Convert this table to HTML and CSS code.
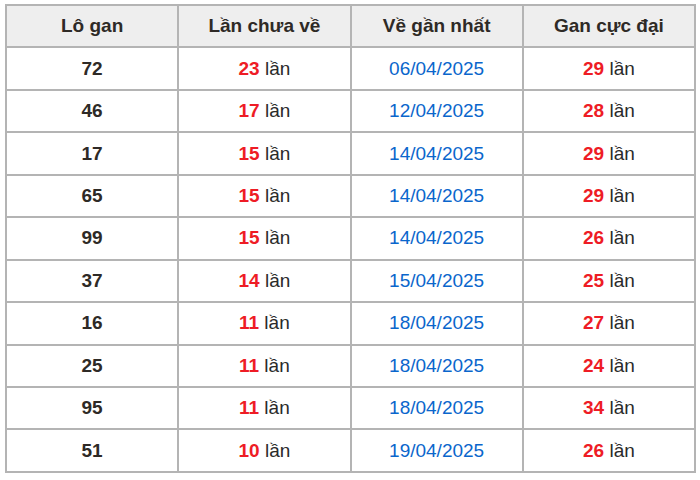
FILE: index.html
```html
<!DOCTYPE html>
<html lang="vi">
<head>
<meta charset="utf-8">
<title>Lô gan</title>
<link rel="stylesheet" href="styles.css">
</head>
<body>
<table class="gan">
  <thead>
    <tr><th>Lô gan</th><th>Lần chưa về</th><th>Về gần nhất</th><th>Gan cực đại</th></tr>
  </thead>
  <tbody>
    <tr><td class="num">72</td><td><span class="red">23</span> lần</td><td class="date">06/04/2025</td><td><span class="red">29</span> lần</td></tr>
    <tr><td class="num">46</td><td><span class="red">17</span> lần</td><td class="date">12/04/2025</td><td><span class="red">28</span> lần</td></tr>
    <tr><td class="num">17</td><td><span class="red">15</span> lần</td><td class="date">14/04/2025</td><td><span class="red">29</span> lần</td></tr>
    <tr><td class="num">65</td><td><span class="red">15</span> lần</td><td class="date">14/04/2025</td><td><span class="red">29</span> lần</td></tr>
    <tr><td class="num">99</td><td><span class="red">15</span> lần</td><td class="date">14/04/2025</td><td><span class="red">26</span> lần</td></tr>
    <tr><td class="num">37</td><td><span class="red">14</span> lần</td><td class="date">15/04/2025</td><td><span class="red">25</span> lần</td></tr>
    <tr><td class="num">16</td><td><span class="red">11</span> lần</td><td class="date">18/04/2025</td><td><span class="red">27</span> lần</td></tr>
    <tr><td class="num">25</td><td><span class="red">11</span> lần</td><td class="date">18/04/2025</td><td><span class="red">24</span> lần</td></tr>
    <tr><td class="num">95</td><td><span class="red">11</span> lần</td><td class="date">18/04/2025</td><td><span class="red">34</span> lần</td></tr>
    <tr><td class="num">51</td><td><span class="red">10</span> lần</td><td class="date">19/04/2025</td><td><span class="red">26</span> lần</td></tr>
  </tbody>
</table>
</body>
</html>
```
FILE: styles.css
```css
html, body {
  margin: 0;
  padding: 0;
  background: #ffffff;
}
body {
  padding: 4px 0 0 5px;
  font-family: "Liberation Sans", Arial, sans-serif;
  color: #2a2a2a;
}
.gan {
  border-collapse: collapse;
  width: 691px;
  table-layout: fixed;
  font-size: 19px;
}
.gan tr {
  height: 42.45px;
}
.gan th, .gan td {
  border: 2px solid #b4b4b4;
  text-align: center;
  vertical-align: middle;
  padding: 0;
}
.gan th {
  background: #eeeeee;
  font-weight: bold;
  color: #2e2a26;
}
.gan td.num {
  font-weight: bold;
  color: #2e2a26;
}
.gan .red {
  color: #ee1c25;
  font-weight: bold;
}
.gan td.date {
  color: #0a66cc;
}
```
